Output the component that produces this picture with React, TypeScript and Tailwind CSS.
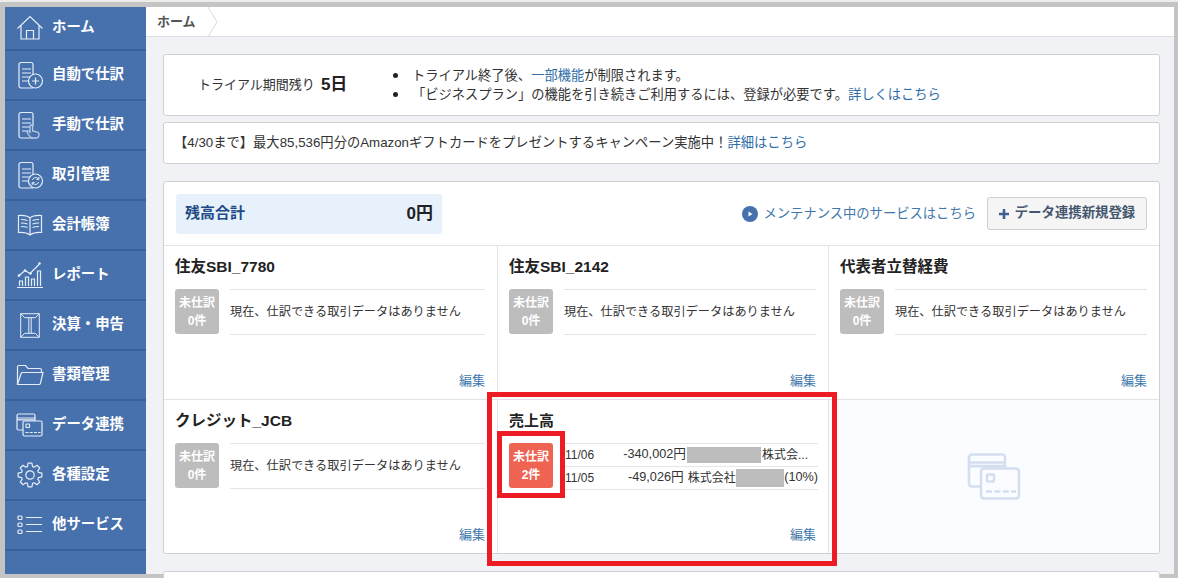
import React from "react";

const stroke = { fill: "none", stroke: "currentColor", strokeWidth: 1.2 };

// sheet with three lines, shared by the three journal entries
const Sheet = () => (
  <>
    <path d="M17 27H5a2 2 0 0 1-2-2V3.500a2 2 0 0 1 2-2h10a2 2 0 0 1 2 2V15" {...stroke} />
    <path d="M6 8h9M6 12h9M6 16h9M6 20h6" {...stroke} />
  </>
);

const HomeIcon = () => (
  <svg width="28" height="26" viewBox="0 0 28 26">
    <path d="M1.500 13.500 14 1.500l12.500 12M5 11v13h18V11M10.500 24V15.500h7V24" {...stroke} />
  </svg>
);
const AutoIcon = () => (
  <svg width="28" height="28" viewBox="0 0 28 28">
    <Sheet />
    <circle cx="19.500" cy="20" r="7" fill="#4771ad" stroke="currentColor" strokeWidth="1.200" />
    <path d="M19.500 16.500v7M16 20h7" {...stroke} />
  </svg>
);
const HandIcon = () => (
  <svg width="28" height="28" viewBox="0 0 28 28">
    <Sheet />
    <path d="M14 15.500c0-2 2.600-2 2.600 0v4.500l4 .8c1.500.3 2.400 1 2.400 2.400 0 2-1 3.800-3 3.800h-3.500c-1.300 0-2-.6-2.700-1.600l-2.400-3.500c-.8-1.300 1-2.400 2-1.200l.6.600z" fill="#4771ad" stroke="#b9cae3" strokeWidth="1.300" />
  </svg>
);
const TradeIcon = () => (
  <svg width="28" height="28" viewBox="0 0 28 28">
    <Sheet />
    <circle cx="19.500" cy="20" r="7" fill="#4771ad" stroke="currentColor" strokeWidth="1.200" />
    <path d="M16.500 19a3.200 3.200 0 0 1 5.400-1.500l.8.8M22.500 21a3.200 3.200 0 0 1-5.400 1.500l-.8-.8M22.800 16v2.400h-2.400M16.200 24v-2.400h2.400" {...stroke} strokeWidth="1" />
  </svg>
);
const BookIcon = () => (
  <svg width="26" height="22" viewBox="0 0 26 22">
    <path d="M13 4C10.500 1.800 6 1.200 1.500 1.500v17c4.500-.3 8.500.2 11.500 2.500 3-2.300 7-2.800 11.500-2.500v-17C20 1.200 15.500 1.800 13 4zM13 4v17" {...stroke} />
    <path d="M4 5.500c2.500 0 4.500.2 6.500 1M4 9c2.500 0 4.500.2 6.500 1M4 12.500c2.500 0 4.500.2 6.500 1M22 5.500c-2.500 0-4.500.2-6.500 1M22 9c-2.500 0-4.500.2-6.500 1M22 12.500c-2.500 0-4.500.2-6.500 1" {...stroke} />
  </svg>
);
const ReportIcon = () => (
  <svg width="28" height="28" viewBox="0 0 28 28">
    <path d="M2 15.500 9 9.500l5 3 9-9" {...stroke} />
    <circle cx="3" cy="14.500" r="1.300" fill="currentColor" />
    <circle cx="9" cy="9.500" r="1.300" fill="currentColor" />
    <circle cx="14.500" cy="12.500" r="1.300" fill="currentColor" />
    <circle cx="23.500" cy="2.500" r="1.300" fill="currentColor" />
    <path d="M1 26.500h26M3.500 25v-5h3v5M9.500 25v-9h3v9M15.500 25v-7h3v7M21.500 25V10h3v15" {...stroke} />
  </svg>
);
// closing book: outer frame, mitred corners and an I beam in the middle
const BoxIcon = () => (
  <svg width="20" height="25" viewBox="0 0 20 25">
    <path d="M.7.700h18.600v23.600H.7zM.7.700l4 4M19.300.700l-4 4M.7 24.300l4-4M19.300 24.300l-4-4M4.700 4.700h10.600M4.700 20.300h10.600M8.800 4.700v15.600M11.200 4.700v15.600" {...stroke} strokeWidth="1" />
  </svg>
);
const FolderIcon = () => (
  <svg width="28" height="22" viewBox="0 0 28 22">
    <path d="M1.500 20V3a1.500 1.500 0 0 1 1.500-1.500h6.500L12 4.500h12a1.500 1.500 0 0 1 1.500 1.500v2M1.500 20.500h21.500a1.500 1.500 0 0 0 1.400-1l2.600-11H6.500a1.500 1.500 0 0 0-1.400 1z" {...stroke} />
  </svg>
);
const CardsIcon = ({ w, h, sw = 1.2 }: { w: number; h: number; sw?: number }) => (
  <svg width={w} height={h} viewBox="0 0 27 24" fill="none" stroke="currentColor" strokeWidth={sw}>
    <path d="M7 17H2.500A1.500 1.500 0 0 1 1 15.500V2.500A1.500 1.500 0 0 1 2.500 1h15A1.500 1.500 0 0 1 19 2.500V8" />
    <path d="M1 5h18M1 6.800h18" />
    <rect x="7" y="8" width="19" height="15" rx="1.500" />
    <rect x="10" y="11" width="3.500" height="3.500" rx=".5" />
    <path d="M9.500 19.500h15" strokeDasharray="3 1.200" />
  </svg>
);
// eight toothed cog
const gearPath = (() => {
  const pts: string[] = [];
  for (let i = 0; i < 8; i++) {
    const a = (i * Math.PI) / 4;
    const at = (r: number, d: number) =>
      `${(13 + r * Math.cos(a + d)).toFixed(2)} ${(13 + r * Math.sin(a + d)).toFixed(2)}`;
    pts.push(at(8.8, -0.3), at(12, -0.16), at(12, 0.16), at(8.8, 0.3));
  }
  return `M${pts.join("L")}Z`;
})();
const GearIcon = () => (
  <svg width="26" height="26" viewBox="0 0 26 26">
    <path d={gearPath} {...stroke} strokeLinejoin="round" />
    <circle cx="13" cy="13" r="4.200" {...stroke} />
  </svg>
);
const ListIcon = () => (
  <svg width="26" height="22" viewBox="0 0 26 22">
    <rect x="1" y="2" width="4" height="3.500" rx="1" {...stroke} />
    <rect x="1" y="9" width="4" height="3.500" rx="1" {...stroke} />
    <rect x="1" y="16" width="4" height="3.500" rx="1" {...stroke} />
    <path d="M9 3.500h16M9 10.500h16M9 17.500h16" {...stroke} />
  </svg>
);

const menu = [
  { label: "ホーム", icon: <HomeIcon /> },
  { label: "自動で仕訳", icon: <AutoIcon /> },
  { label: "手動で仕訳", icon: <HandIcon /> },
  { label: "取引管理", icon: <TradeIcon /> },
  { label: "会計帳簿", icon: <BookIcon /> },
  { label: "レポート", icon: <ReportIcon /> },
  { label: "決算・申告", icon: <BoxIcon /> },
  { label: "書類管理", icon: <FolderIcon /> },
  { label: "データ連携", icon: <CardsIcon w={27} h={24} /> },
  { label: "各種設定", icon: <GearIcon /> },
  { label: "他サービス", icon: <ListIcon /> },
];

const Badge = ({ count, active }: { count: number; active?: boolean }) => (
  <div
    className={`flex h-[45px] w-[44px] shrink-0 flex-col items-center justify-center rounded-[3px] text-[12px] font-bold leading-[18px] text-white ${
      active ? "bg-[#ee6352]" : "bg-[#bdbdbd]"
    }`}
  >
    <span>未仕訳</span>
    <span>{count}件</span>
  </div>
);

const Account = ({ name, border }: { name: string; border: string }) => (
  <div className={`flex flex-col pt-[11px] pr-3 pb-[10px] pl-[11px] ${border}`}>
    <h3 className="text-[15.500px] font-bold leading-5 text-[#222]">{name}</h3>
    <div className="mt-[12px] flex gap-[11px]">
      <Badge count={0} />
      <div className="flex h-[46px] flex-1 items-center border-y border-[#e5e5e5] text-[12.200px] text-[#333]">
        現在、仕訳できる取引データはありません
      </div>
    </div>
    <a className="mt-auto self-end text-[13px] leading-4 text-[#3f78ad]">編集</a>
  </div>
);

const Dot = () => (
  <span className="flex w-[22px] shrink-0 items-center pl-[3px]">
    <span className="h-[5px] w-[5px] rounded-full bg-[#222]" />
  </span>
);

export default function App() {
  return (
    <div
      className="relative flex h-[578px] w-[1178px] overflow-hidden border-t-2 border-[#ececec] bg-[#c4c4c4] pt-[5px] pr-1 pb-1 pl-[5px]"
      style={{ fontFamily: '"Liberation Sans", "Noto Sans CJK JP", sans-serif' }}
    >
      <nav className="w-[141px] shrink-0 bg-[#4771ad] text-white">
        {menu.map((m, i) => (
          <div
            key={m.label}
            className={`flex items-center border-b-2 border-[#3a6199] ${i === 0 ? "h-[44px]" : "h-[50px]"}`}
          >
            <div className="flex w-[47px] shrink-0 justify-center pl-[2px] text-[#e6edf7]">{m.icon}</div>
            <span className="text-[14.400px] font-bold">{m.label}</span>
          </div>
        ))}
      </nav>

      <main className="flex min-w-0 flex-1 flex-col bg-[#f0f2f5]">
        <div className="flex h-[30px] shrink-0 items-center border-b border-[#e0e0e0] bg-white">
          <span className="pl-[11px] text-[13px] font-bold text-[#555]">ホーム</span>
          <svg width="12" height="30" viewBox="0 0 12 30" className="ml-[11px]">
            <path d="M1 0l9 15-9 15" fill="none" stroke="#dcdcdc" />
          </svg>
        </div>

        <div className="pt-[17px] pr-[14px] pl-[17px]">
          <section className="flex h-[62px] items-center rounded-[3px] border border-[#d0d0d0] bg-white">
            <div className="flex w-[226px] items-center pl-[34px]">
              <span className="text-[13px] text-[#333]">トライアル期間残り</span>
              <span className="ml-[6px] text-[17px] font-bold text-[#222]">5日</span>
            </div>
            <ul className="text-[13.250px] leading-[19px] text-[#333]">
              <li className="flex">
                <Dot />
                <span>
                  トライアル終了後、<a className="text-[#2f6da8]">一部機能</a>が制限されます。
                </span>
              </li>
              <li className="flex">
                <Dot />
                <span>
                  「ビジネスプラン」の機能を引き続きご利用するには、登録が必要です。
                  <a className="text-[#2f6da8]">詳しくはこちら</a>
                </span>
              </li>
            </ul>
          </section>

          <section className="mt-[6px] flex h-[42px] items-center rounded-[3px] border border-[#d0d0d0] bg-white pl-[10px] text-[13.300px] text-[#333]">
            【4/30まで】最大85,536円分のAmazonギフトカードをプレゼントするキャンペーン実施中！
            <a className="text-[#2f6da8]">詳細はこちら</a>
          </section>

          <section className="mt-[17px] overflow-hidden rounded-[3px] border border-[#d0d0d0] bg-white">
            <div className="flex h-[64px] items-center justify-between border-b border-[#e3e3e3] pr-3 pl-3">
              <div className="flex h-10 w-[266px] items-center justify-between rounded-[3px] bg-[#e6f1fc] px-[9px]">
                <span className="text-[15px] font-bold text-[#1f4a85]">残高合計</span>
                <span className="text-[17px] font-bold text-[#222]">0円</span>
              </div>
              <div className="flex items-center">
                <svg width="16" height="16" viewBox="0 0 16 16" className="mr-[6px]">
                  <circle cx="8" cy="8" r="8" fill="#4771ad" />
                  <path d="M6.500 5.500 10.500 8l-4 2.500z" fill="#fff" />
                </svg>
                <a className="text-[13.300px] text-[#3f78ad]">メンテナンス中のサービスはこちら</a>
                <button className="ml-[11px] flex h-[33px] w-[160px] items-center justify-center rounded-[3px] border border-[#cfcfcf] bg-[#f5f5f5] text-[13.400px] font-bold text-[#44566e]">
                  <svg width="10" height="10" viewBox="0 0 10 10" className="mr-[6px]">
                    <path d="M5 0v10M0 5h10" stroke="#3b6096" strokeWidth="2.600" />
                  </svg>
                  データ連携新規登録
                </button>
              </div>
            </div>

            <div className="grid grid-cols-[334px_331px_1fr] grid-rows-[154px_153px]">
              <Account name="住友SBI_7780" border="border-r border-b border-[#e3e3e3]" />
              <Account name="住友SBI_2142" border="border-r border-b border-[#e3e3e3]" />
              <Account name="代表者立替経費" border="border-b border-[#e3e3e3]" />
              <Account name="クレジット_JCB" border="border-r border-[#e3e3e3]" />
              <div className="flex flex-col border-r border-[#e3e3e3] pt-[11px] pr-[10px] pb-[10px] pl-[11px]">
                <h3 className="text-[15px] font-bold leading-5 text-[#222]">売上高</h3>
                <div className="mt-[12px] flex gap-3">
                  <Badge count={2} active />
                  <div className="min-w-0 flex-1 whitespace-nowrap border-t border-[#e5e5e5] text-[12px] text-[#333]">
                    <div className="flex h-[23px] items-center border-b border-[#e5e5e5]">
                      <span className="w-[36px]">11/06</span>
                      <span className="w-[85px] text-right text-[12.700px]">-340,002円</span>
                      <span className="mx-px h-[16px] w-[74px] bg-[#bdbdbd]" />
                      <span>株式会...</span>
                    </div>
                    <div className="flex h-[23px] items-center border-b border-[#e5e5e5]">
                      <span className="w-[36px]">11/05</span>
                      <span className="w-[84px] text-right text-[12.700px]">-49,026円</span>
                      <span className="ml-[4px]">株式会社</span>
                      <span className="h-[18px] w-[49px] bg-[#bdbdbd]" />
                      <span className="text-[12.700px]">(10%)</span>
                    </div>
                  </div>
                </div>
                <a className="mt-auto mr-[2px] self-end text-[13px] leading-4 text-[#3f78ad]">編集</a>
              </div>
              <div className="flex items-center justify-center bg-[#fbfcff] text-[#d3deee]">
                <CardsIcon w={54} h={49} sw={1.3} />
              </div>
            </div>
          </section>

          <div className="mt-[17px] h-10 rounded-[3px] border border-[#d0d0d0] bg-white" />
        </div>
      </main>

      {/* highlight boxes drawn over the screenshot */}
      <div className="absolute top-[390px] left-[487px] h-[174px] w-[350px] border-[5px] border-[#ed1c24]" />
      <div className="absolute top-[429px] left-[497px] h-[67px] w-[68px] border-[5px] border-[#ed1c24]" />
    </div>
  );
}
